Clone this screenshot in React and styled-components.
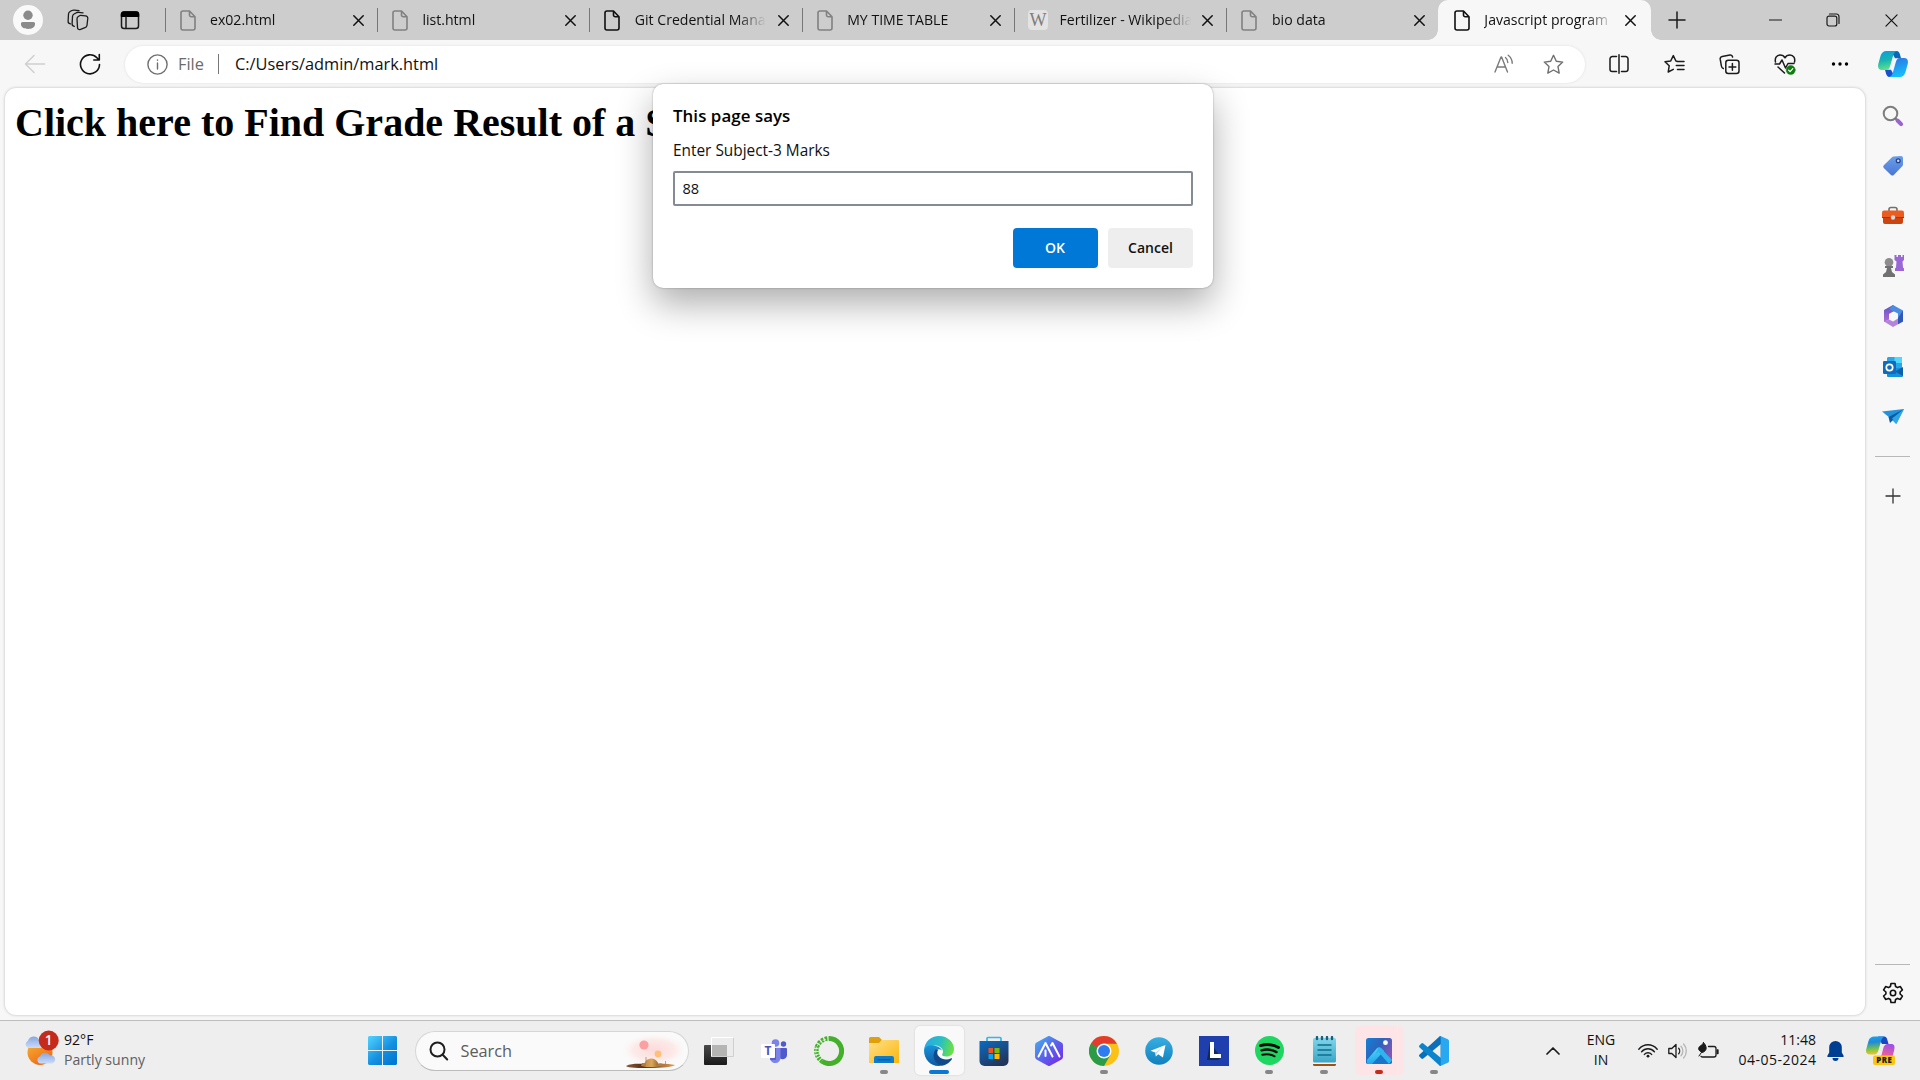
import React from "react";
import styled, { createGlobalStyle, css } from "styled-components";

const ui = `"Open Sans", "Noto Sans", sans-serif`;

const Global = createGlobalStyle`
  *, *::before, *::after { box-sizing: border-box; }
  html, body { margin: 0; height: 100%; overflow: hidden; }
  body { background: #f7f7f7; font-family: ${ui}; color: #111; }
  svg { display: block; flex: none; }
`;

const Screen = styled.div`
  width: 1920px;
  height: 1080px;
  display: flex;
  flex-direction: column;
  background: #f7f7f7;
  position: relative;
  overflow: hidden;
`;

const Slot = styled.div`
  flex: none;
  width: ${(p) => p.$w || 55}px;
  height: ${(p) => (p.$h ? p.$h + "px" : "100%")};
  display: flex;
  align-items: center;
  justify-content: center;
`;

/* ---------- tab strip ---------- */
const TabStrip = styled.header`
  flex: none;
  height: 40px;
  display: flex;
  background: #cdcdcd;
`;
const StripTools = styled.div`
  display: flex;
  width: 164px;
  padding-left: 3px;
`;
const Tab = styled.div`
  position: relative;
  width: 212.4px;
  height: 40px;
  display: flex;
  align-items: center;
  padding: 0 ${(p) => p.$end || 11}px 0 15.5px;
  font-size: 14.1px;
  ${(p) =>
    p.$active
      ? css`
          background: #f7f7f7;
          border-radius: 10px 10px 0 0;
          &::before, &::after {
            content: "";
            position: absolute;
            bottom: 0;
            width: 10px;
            height: 10px;
          }
          &::before { left: -10px; background: radial-gradient(circle at 0 0, transparent 9.5px, #f7f7f7 10px); }
          &::after { right: -10px; background: radial-gradient(circle at 100% 0, transparent 9.5px, #f7f7f7 10px); }
        `
      : css`
          &::before {
            content: "";
            position: absolute;
            left: 0.5px;
            top: 8px;
            width: 1px;
            height: 24px;
            background: #777;
          }
        `}
`;
const TabTitle = styled.span`
  flex: 1;
  min-width: 0;
  margin-left: 14.5px;
  line-height: 22px;
  white-space: nowrap;
  overflow: hidden;
  -webkit-mask-image: linear-gradient(90deg, #000 calc(100% - 30px), transparent calc(100% - 1px));
  mask-image: linear-gradient(90deg, #000 calc(100% - 30px), transparent calc(100% - 1px));
`;
const TabClose = styled.div`
  width: 14px;
  margin-left: 9px;
  display: flex;
  justify-content: center;
`;
const WindowButtons = styled.div`
  display: flex;
  margin-left: auto;
`;

/* ---------- toolbar ---------- */
const Toolbar = styled.nav`
  flex: none;
  height: 48px;
  display: flex;
  align-items: center;
  padding-left: 7.5px;
`;
const Omnibox = styled.div`
  width: 1460px;
  height: 37px;
  margin: 0 6.5px 0 7.5px;
  padding: 0 21px 0 22px;
  display: flex;
  align-items: center;
  background: #fff;
  border-radius: 19px;
  box-shadow: 0 0 3px rgba(0, 0, 0, 0.1);
  font-size: 16.35px;
`;
const Scheme = styled.span`
  margin-left: 10px;
  width: 40px;
  color: #6b6b6b;
`;
const Divider = styled.i`
  width: 1px;
  height: 20px;
  background: #777;
`;
const Url = styled.span`
  margin-left: 16px;
  flex: 1;
  color: #111;
`;
const BoxIcons = styled.div`
  display: flex;
  align-items: center;
  gap: 29px;
`;

/* ---------- page + sidebar ---------- */
const Body = styled.div`
  flex: 1;
  display: flex;
  min-height: 0;
`;
const Page = styled.main`
  flex: none;
  width: 1860px;
  height: 927px;
  margin-left: 5px;
  background: #fff;
  border-radius: 11px;
  box-shadow: 0 0 3px rgba(0, 0, 0, 0.25);
`;
const Heading = styled.h1`
  margin: 0;
  padding: 11px 0 0 10px;
  font: bold 40px/47px "Liberation Serif", "Times New Roman", serif;
  color: #000;
  white-space: nowrap;
`;
const Sidebar = styled.aside`
  flex: none;
  width: 55px;
  display: flex;
  flex-direction: column;
  align-items: center;
  padding-top: 2.5px;
`;
const Rule = styled.hr`
  flex: none;
  width: 35px;
  height: 1px;
  margin: ${(p) => p.$m};
  border: 0;
  background: #b8b8b8;
`;

/* ---------- prompt ---------- */
const Prompt = styled.section`
  position: absolute;
  left: 653px;
  top: 84px;
  width: 560px;
  height: 204px;
  padding: 19px 20px 20px;
  display: flex;
  flex-direction: column;
  background: #fff;
  border-radius: 10px;
  box-shadow: 0 0 2px rgba(0, 0, 0, 0.35), 0 16px 36px rgba(0, 0, 0, 0.32);
`;
const PromptTitle = styled.h2`
  margin: 0;
  font-size: 16.9px;
  font-weight: 600;
  line-height: 26px;
  letter-spacing: 0.05px;
  color: #000;
`;
const PromptText = styled.p`
  margin: 10px 0 8px;
  font-size: 15.4px;
  line-height: 24px;
`;
const PromptInput = styled.div`
  height: 35px;
  padding-left: 7.5px;
  border: 2px solid #858b94;
  border-radius: 2px;
  font-size: 14.6px;
  line-height: 30px;
`;
const PromptActions = styled.div`
  display: flex;
  justify-content: flex-end;
  gap: 10px;
  margin-top: auto;
`;
const Button = styled.button`
  width: 85px;
  height: 40px;
  padding: 0 ${(p) => (p.$primary ? 1 : 0)}px 2px 0;
  border: 0;
  border-radius: 4px;
  font: 600 14px ${ui};
  background: ${(p) => (p.$primary ? "#0078d7" : "#eeeeee")};
  color: ${(p) => (p.$primary ? "#fff" : "#111")};
`;

/* ---------- taskbar ---------- */
const Taskbar = styled.footer`
  flex: none;
  height: 60px;
  display: flex;
  align-items: center;
  border-top: 1px solid #bdbdbd;
  background: #eeeeee;
`;
const Weather = styled.div`
  width: 354.5px;
  padding-left: 24px;
  padding-bottom: 2px;
  display: flex;
  gap: 5px;
  font-size: 14.1px;
  line-height: 20px;
`;
const Muted = styled.div`
  color: #606060;
`;
const SearchBox = styled.div`
  width: 274px;
  height: 40px;
  margin: 0 3px 0 5px;
  padding: 0 4px 0 13px;
  display: flex;
  align-items: center;
  background: #fafafa;
  border: 1px solid #d6d6d6;
  border-bottom-color: #bcbcbc;
  border-radius: 20px;
  font-size: 16.3px;
  color: #5c5c5c;
`;
const SearchLabel = styled.span`
  flex: 1;
  margin-left: 12px;
`;
const AppSlot = styled.div`
  position: relative;
  width: 55px;
  height: 59px;
  display: flex;
  align-items: center;
  justify-content: center;
  &::after {
    content: "";
    position: absolute;
    bottom: 6px;
    left: 50%;
    width: ${(p) => (p.$mark === "active" ? 20 : 8)}px;
    height: 4px;
    border-radius: 2px;
    transform: translateX(-50%);
    background: ${(p) => ({ active: "#0a78d4", open: "#868686", alert: "#c42b1c" })[p.$mark] || "transparent"};
  }
`;
const Tile = styled.div`
  width: 49px;
  height: 49px;
  border-radius: 5px;
  display: flex;
  align-items: center;
  justify-content: center;
  background: ${(p) => ({ active: "#f9f9f9", alert: "linear-gradient(90deg,#fde5e7 42px,#f8e9ea 42px,#f8e9ea 43px,#fde5e7 43px)" })[p.$kind] || "transparent"};
  box-shadow: ${(p) => (p.$kind === "active" ? "0 0 2px rgba(0,0,0,.15)" : "none")};
`;
const Tray = styled.div`
  display: flex;
  align-items: center;
  height: 100%;
  margin-left: auto;
  padding-right: 14px;
  font-size: 14px;
  line-height: 20px;
`;
const TrayText = styled.div`
  width: ${(p) => p.$w}px;
  margin-right: ${(p) => p.$mr || 0}px;
  padding-bottom: 2px;
  text-align: ${(p) => p.$align};
  white-space: nowrap;
`;
const DateText = styled.div`
  letter-spacing: 0.5px;
  margin-right: -0.5px;
`;

/* ---------- icons ---------- */
const Line = ({ w = 20, h = w, vb = "0 0 20 20", c = "#1b1b1b", sw = 1.3, children }) => (
  <svg width={w} height={h} viewBox={vb} fill="none" stroke={c} strokeWidth={sw} strokeLinecap="round" strokeLinejoin="round">
    {children}
  </svg>
);
const Avatar = () => (
  <svg width="30" height="30" viewBox="0 0 30 30">
    <circle cx="15" cy="15" r="15" fill="#f9f9f9" />
    <circle cx="15" cy="10.2" r="4.7" fill="#8b8b8b" />
    <path d="M8 19.3a2 2 0 0 1 2-2.3h10a2 2 0 0 1 2 2.3c0 3-3 4.700-7 4.700s-7-1.700-7-4.700z" fill="#8b8b8b" />
  </svg>
);
const Workspaces = () => (
  <Line w={22} vb="0 0 22 22">
    <path d="M13.500 6.300l5 .5c1.500.2 2.300 1.200 2.300 2.500l-.8 7c-.2 1.300-.9 2-2 2.300l-4.500 1.800c-1.600.5-3-.3-3-2L10 10c0-1.200.4-1.900 1.300-2.500z" />
    <path d="M7.300 17.300c-1.500-.3-2.300-1.200-2.200-2.600L5.500 7.500c.1-1.200.6-1.900 1.600-2.500l2.300-1.300c.8-.4 1.500-.5 2.400-.4l4.200.5" />
    <path d="M3.400 14.800C2 14.500 1 13.600 1.100 12.200l.4-7.200c.1-1.200.6-1.900 1.600-2.500l1.800-1c.8-.4 1.500-.5 2.400-.4l4.700.5" />
  </Line>
);
const TabActions = () => (
  <Line w={20} sw={1.5}>
    <rect x="1.5" y="2" width="17" height="16.5" rx="2.5" />
    <path d="M1.500 6.200V4.500A2.500 2.500 0 0 1 4 2h12a2.500 2.500 0 0 1 2.500 2.500v1.700z" fill="#000" stroke="#000" />
    <path d="M6 7v11" />
  </Line>
);
const Doc = ({ dark }) => (
  <Line w={16} h={21} vb="0 0 16 21" c={dark ? "#111" : "#818181"} sw={1.6}>
    <path d="M3 1h6.500L15 6.700V18a2 2 0 0 1-2 2H3a2 2 0 0 1-2-2V3a2 2 0 0 1 2-2zM9.500 1v4a1.700 1.700 0 0 0 1.700 1.700H15" />
  </Line>
);
const Cross = ({ s = 11, sw = 1.5 }) => (
  <Line w={s} vb="0 0 11 11" sw={sw} c="#111">
    <path d="M.8.8l9.400 9.400M10.200.8L.8 10.200" />
  </Line>
);
const WikiMark = styled.span`
  width: 20px;
  height: 20px;
  margin-left: -1px;
  margin-right: -3px;
  border-radius: 4px;
  background: #e3e3e3;
  color: #7d7d7d;
  font: 18px/20px "Liberation Serif", serif;
  text-align: center;
`;

const CopilotMark = ({ w = 30, h = 26 }) => (
  <svg width={w} height={h} viewBox="0 0 30 26">
    <defs>
      <linearGradient id="cpA" x1="0" y1="0" x2=".2" y2="1">
        <stop offset="0" stopColor="#0c9be0" /><stop offset=".55" stopColor="#1bb5b0" /><stop offset="1" stopColor="#5be08c" />
      </linearGradient>
      <linearGradient id="cpB" x1="0" y1="0" x2=".3" y2="1">
        <stop offset="0" stopColor="#2f6fe0" /><stop offset="1" stopColor="#15bdfb" />
      </linearGradient>
    </defs>
    <path d="M13 0h5.500c2 0 2.900 1.600 3.500 3.500l1 3.700H17z" fill="#0a66b8" />
    <path d="M17 26h-5.500c-2 0-2.900-1.600-3.500-3.500L7 18.700h6z" fill="#1a4fd0" />
    <path d="M8.500 0H19c-2.500.5-3.300 2.500-4 5l-2.700 9.500c-.8 3-2 4.500-4.500 4.500H4c-3.400 0-4.500-2.500-3.700-6L2.500 5C3.300 2 5.300 0 8.500 0z" fill="url(#cpA)" />
    <path d="M21.500 26H11c2.500-.5 3.300-2.500 4-5l2.700-9.500c.8-3 2-4.500 4.500-4.500H26c3.400 0 4.500 2.500 3.700 6L27.500 21c-.8 3-2.800 5-6 5z" fill="url(#cpB)" />
  </svg>
);
const SideSearch = () => (
  <svg width="22" height="22" viewBox="0 0 22 22" fill="none">
    <circle cx="8.500" cy="8.500" r="6.800" stroke="#7d7d7d" strokeWidth="2" />
    <path d="M13 13l2 2" stroke="#777" strokeWidth="2" />
    <path d="M15.500 15.500l3.600 3.600" stroke="#9a63cf" strokeWidth="4" strokeLinecap="round" />
  </svg>
);
const SideTag = () => (
  <svg width="22" height="22" viewBox="0 0 22 22">
    <defs><linearGradient id="tg" x1="0" y1="0" x2="0" y2="1"><stop stopColor="#6ba0ea" /><stop offset="1" stopColor="#4a76d6" /></linearGradient></defs>
    <path d="M11.500 1.500L19 1a2 2 0 0 1 2 2v6.500c0 .8-.3 1.300-.8 1.800l-8.400 8.600a2 2 0 0 1-2.800 0L1.800 13a2 2 0 0 1 0-2.800L10 2.200c.4-.4.900-.7 1.500-.7z" fill="url(#tg)" />
    <circle cx="16.200" cy="5.800" r="1.900" fill="#c8dcf8" stroke="#27408c" strokeWidth="1.300" />
  </svg>
);
const SideTools = () => (
  <svg width="22" height="19" viewBox="0 1.500 22 17">
    <path d="M7 6V4a2 2 0 0 1 2-2h4a2 2 0 0 1 2 2v2" fill="none" stroke="#707070" strokeWidth="1.600" />
    <rect y="5" width="22" height="8" rx="2" fill="#ec5c1e" />
    <path d="M1 12h20v4.500a2 2 0 0 1-2 2H3a2 2 0 0 1-2-2z" fill="#cc4410" />
    <rect x="0" y="11.500" width="22" height="1" fill="#a93408" />
    <circle cx="11" cy="12" r="2.200" fill="#d9d9d9" />
  </svg>
);
const SideGames = () => (
  <svg width="22" height="22" viewBox="0 0 22 22">
    <path d="M12.500 0h2v2H16V0h3v2h1.500V0h1.500v5l-1.500 1.500.5 6 1 1V16h-9v-2.500l1-1 .5-6L12.500 5z" fill="#9a68d4" />
    <circle cx="7" cy="7.300" r="4.300" fill="#8c8c8c" />
    <path d="M3 11h8v2H9l1 4 3 2.500V22H1v-2.500L4 17l1-4H3z" fill="#717171" />
  </svg>
);
const SideM365 = () => (
  <svg width="20" height="22" viewBox="0 0 20 22">
    <defs><linearGradient id="mm" x1="0" y1="0" x2="0" y2="1"><stop stopColor="#5a55c0" /><stop offset="1" stopColor="#b56ad8" /></linearGradient></defs>
    <path d="M10 0L1 5v12l5-2.500V9l8-4.500z" fill="url(#mm)" />
    <path d="M10 0l10 5.500V16l-5-3V8.500L6 4z" fill="#4b8be0" />
    <path d="M1 16.500L10 22l10-5.500v-6l-5 3-5 3-4-2z" fill="#b483dc" />
    <path d="M20 5.500v11l-5 2.700V13z" fill="#3157b8" />
    <path d="M10 7l3.500 2v4L10 15l-3.500-2V9z" fill="#f7f7f7" />
  </svg>
);
const SideOutlook = () => (
  <svg width="20" height="20" viewBox="0 0 20 20">
    <path d="M5 0h13a1 1 0 0 1 1 1v10H4V1z" fill="#28a8ea" />
    <path d="M11.500 0H18a1 1 0 0 1 1 1v5h-7.500z" fill="#50d9ff" />
    <path d="M4 11h16v8a1 1 0 0 1-1 1H5a1 1 0 0 1-1-1z" fill="#1490df" />
    <path d="M20 10v9l-8-4.500z" fill="#0f5ea8" />
    <rect y="4" width="13" height="13" rx="1.200" fill="#0f6cbd" />
    <circle cx="6.500" cy="10.500" r="3.200" fill="none" stroke="#fff" strokeWidth="1.700" />
  </svg>
);
const SideDrop = () => (
  <svg width="22" height="16" viewBox="0 0 22 16">
    <path d="M0 2.500L22 0 8 9z" fill="#2493dc" />
    <path d="M22 0l-8 15-6-6z" fill="#35b4ee" />
    <path d="M22 0L6.500 8 8 14l3-3z" fill="#0b5ba5" />
    <path d="M22 0L10 9.500l4.500 5.500z" fill="#2ea6e6" />
  </svg>
);
const Gear = () => (
  <Line w={22} vb="0 0 22 22" sw={1.6} c="#111">
    <path d="M9 1.500h4l.6 3 1.900 1.100 2.900-1 2 3.400-2.300 2v2l2.300 2-2 3.400-2.900-1-1.900 1.100-.6 3H9l-.6-3-1.900-1.100-2.900 1-2-3.400 2.300-2v-2l-2.300-2 2-3.400 2.900 1 1.900-1.100z" />
    <circle cx="11" cy="11" r="2.700" />
  </Line>
);

const WeatherIcon = () => (
  <svg width="35" height="36" viewBox="0 0 35 36">
    <defs>
      <linearGradient id="sun" x1="0" y1="0" x2=".6" y2="1"><stop stopColor="#f6b73c" /><stop offset="1" stopColor="#ee6a12" /></linearGradient>
      <linearGradient id="cl" x1="0" y1="0" x2="0" y2="1"><stop stopColor="#86a6e2" /><stop offset="1" stopColor="#ccdcf6" /></linearGradient>
    </defs>
    <circle cx="16" cy="22.500" r="12.500" fill="url(#sun)" />
    <path d="M4 18a4 4 0 0 1 0-7.300 6 6 0 0 1 11-1 4.500 4.500 0 0 1 3 8.300z" fill="url(#cl)" />
    <path d="M16.500 33.500a3.600 3.600 0 0 1-.5-7 5.500 5.500 0 0 1 10-1 4.100 4.100 0 0 1 2 8z" fill="url(#cl)" />
    <circle cx="24.700" cy="10.500" r="10" fill="#c42b1c" />
    <text x="24.700" y="15.300" textAnchor="middle" fontSize="13.500" fontFamily="Open Sans" fontWeight="600" fill="#fff">1</text>
  </svg>
);
const StartIcon = () => (
  <svg width="29" height="29" viewBox="0 0 29 29">
    <defs><linearGradient id="wn" gradientUnits="userSpaceOnUse" x1="0" y1="0" x2="25" y2="27"><stop stopColor="#52d4ff" /><stop offset=".6" stopColor="#1590e0" /><stop offset="1" stopColor="#0378d4" /></linearGradient></defs>
    <path d="M1 0h13v14H0V1zM15 0h13l1 1v13H15zM0 15h14v14H1l-1-1zM15 15h14v13l-1 1H15z" fill="url(#wn)" />
  </svg>
);
const SearchArt = () => (
  <svg width="65" height="36" viewBox="0 0 65 36">
    <defs>
      <radialGradient id="glow"><stop stopColor="#fdd9da" /><stop offset=".6" stopColor="#fce6e3" stopOpacity=".8" /><stop offset="1" stopColor="#fafafa" stopOpacity="0" /></radialGradient>
      <linearGradient id="gr"><stop stopColor="#8b5a3a" /><stop offset=".35" stopColor="#5b2c14" /><stop offset="1" stopColor="#e0a05a" /></linearGradient>
      <linearGradient id="dm"><stop stopColor="#c08a45" /><stop offset=".5" stopColor="#dca55a" /><stop offset="1" stopColor="#94642e" /></linearGradient>
    </defs>
    <ellipse cx="35" cy="17" rx="34" ry="17" fill="url(#glow)" />
    <circle cx="25" cy="12" r="4.600" fill="#fba0a2" />
    <circle cx="39" cy="21" r="3.400" fill="#ffc078" />
    <path d="M7 33c6-3 14-2 20-2s22-1 29 1c-2 2-12 3-24 3S9 35 7 33z" fill="url(#gr)" />
    <path d="M26 34c-2-5 2-8.500 6.500-8.500S40 30 40 34z" fill="url(#dm)" />
    <path d="M38 33c0-2 3-4 6-2l2 2zM22 33l1-3h4v4z" fill="#b47c3c" />
    <path d="M27 29v-5M46.500 31v-3" stroke="#8d6a50" strokeWidth=".6" />
  </svg>
);
const TaskView = () => (
  <svg width="30" height="28" viewBox="0 0 30 28">
    <defs><linearGradient id="tv" x1="0" y1="0" x2="0" y2="1"><stop stopColor="#4a4a4a" /><stop offset="1" stopColor="#1a1a1a" /></linearGradient></defs>
    <rect x="0" y="8" width="23" height="20" rx="1" fill="url(#tv)" />
    <rect x="7" y="0" width="23" height="20" rx="1" fill="#ececec" />
    <rect x="7" y="8" width="16" height="12" fill="#b5b5b3" />
    <path d="M7 19.500h22.500V1" stroke="#cfcfcf" fill="none" />
    <path d="M7.500 19V.5H29" stroke="#fff" fill="none" />
  </svg>
);
const Teams = () => (
  <svg width="27" height="24" viewBox="0 0 27 24">
    <circle cx="14.500" cy="4" r="3.800" fill="#7b83eb" />
    <circle cx="22.500" cy="5" r="2.700" fill="#5059c9" />
    <path d="M16 9h9a1 1 0 0 1 1 1v6a4.500 4.500 0 0 1-8 2.500z" fill="#5059c9" />
    <path d="M9 9h10.500v9a5.300 5.300 0 0 1-10.500 1.500z" fill="#7b83eb" />
    <path d="M9 9h6v12H9z" fill="#4b53bc" opacity=".7" />
    <rect y="5" width="14" height="14" rx="1" fill="#fff" />
    <text x="7" y="16" textAnchor="middle" fontSize="12" fontWeight="700" fontFamily="Open Sans" fill="#4b53bc">T</text>
  </svg>
);
const Anaconda = () => (
  <svg width="30" height="30" viewBox="0 0 30 30" fill="none" stroke="#43b02a">
    <path d="M15 2.500a12.500 12.500 0 1 1-7 22.800" strokeWidth="5" />
    <path d="M8 25.300A12.500 12.500 0 0 1 3 11" strokeWidth="4.500" strokeDasharray="2 1" />
    <path d="M3 11A12.500 12.500 0 0 1 15 2.500" strokeWidth="4.500" strokeDasharray="2.600 1.200" />
    <path d="M3.500 22A12.500 12.500 0 0 1 12 3.500" stroke="#eee" strokeWidth=".9" strokeDasharray="1.500 1" />
  </svg>
);
const Explorer = () => (
  <svg width="30" height="27" viewBox="0 0 30 27">
    <defs><linearGradient id="ex" x1="0" y1="0" x2="1" y2="1"><stop stopColor="#ffe08a" /><stop offset="1" stopColor="#fbb70c" /></linearGradient></defs>
    <path d="M0 1.500A1.500 1.500 0 0 1 1.500 0H10l3 3-3 4H0z" fill="#dfa00c" />
    <path d="M0 6h10l3-3h16a1 1 0 0 1 1 1v22H0z" fill="url(#ex)" />
    <path d="M5 26v-5a2 2 0 0 1 2-2h16a2 2 0 0 1 2 2v5z" fill="#0f7ccb" />
    <path d="M8.500 22.800h13" stroke="#0a4f94" />
  </svg>
);
const Edge = () => (
  <svg width="30" height="30" viewBox="0 0 30 30">
    <defs>
      <linearGradient id="e1" x1="0" y1=".3" x2="1" y2=".5"><stop stopColor="#28a9e8" /><stop offset=".55" stopColor="#2bc0c0" /><stop offset="1" stopColor="#6be33c" /></linearGradient>
      <linearGradient id="e2" x1="0" y1="0" x2="0" y2="1"><stop stopColor="#1b93d8" /><stop offset="1" stopColor="#0c59a4" /></linearGradient>
    </defs>
    <path d="M0 14C.8 5.500 7 0 15 0c9 0 15 6.500 15 13 0 5-3.500 7.500-7.500 7.500-3 0-4.800-1-4.300-2.300.8-1.200 1.100-2.700.5-4.200C17 9 7 7 0 14z" fill="url(#e1)" />
    <path d="M0 14c2-4.500 6.500-5 10-4.500 5 .8 8 3.500 8.600 6.200-1.500-4-7.600-3-7.600 2.300 0 6 5 10.500 10 8-2 2.500-4.500 4-6.500 4C6.500 30 0 23.500 0 14z" fill="url(#e2)" />
    <path d="M11.500 13.500c-4.500 7-.5 14 6 16.200C22 29.500 26 26 28 23c.3-.7-.3-1-.8-.7-4 2.200-9.200 1.500-12-1.500-2.500-2.500-2.200-5-1-7z" fill="#114a8b" />
  </svg>
);
const Store = () => (
  <svg width="30" height="30" viewBox="0 0 30 30">
    <defs><linearGradient id="st" x1="0" y1="0" x2=".6" y2="1"><stop stopColor="#0a6cc2" /><stop offset="1" stopColor="#24355c" /></linearGradient></defs>
    <path d="M8 7V2.500A1 1 0 0 1 9 1.500h12a1 1 0 0 1 1 1V7" fill="none" stroke="#2cb8f2" strokeWidth="1.700" />
    <path d="M.5 5h29v20a5 5 0 0 1-5 5h-19a5 5 0 0 1-5-5z" fill="url(#st)" />
    <path d="M9.500 12H14v5H9.500z" fill="#f25022" /><path d="M15.500 12h5v5h-5z" fill="#7fba00" />
    <path d="M9.500 18H14v5H9.500z" fill="#00a4ef" /><path d="M15.500 18h5v5h-5z" fill="#ffb900" />
  </svg>
);
const HexAI = () => (
  <svg width="28" height="30" viewBox="0 0 28 30">
    <defs><linearGradient id="hx" x1="0" y1="0" x2="1" y2="1"><stop stopColor="#42b8f5" /><stop offset=".5" stopColor="#5a63e8" /><stop offset="1" stopColor="#7a1ff0" /></linearGradient></defs>
    <path d="M12.500.4a3 3 0 0 1 3 0l11 6.200A3 3 0 0 1 28 9.200v11.600a3 3 0 0 1-1.500 2.600l-11 6.200a3 3 0 0 1-3 0l-11-6.200A3 3 0 0 1 0 20.800V9.200a3 3 0 0 1 1.500-2.600z" fill="url(#hx)" />
    <path d="M3.500 20.500L10.500 7l7 13.500M10.500 14.500V20M16 9.500L17.500 7l7 13.500" stroke="#fff" strokeWidth="2" fill="none" strokeLinecap="round" strokeLinejoin="round" />
  </svg>
);
const Chrome = () => (
  <svg width="30" height="30" viewBox="0 0 30 30">
    <circle cx="15" cy="15" r="15" fill="#fbc116" />
    <path d="M15 15L2 7.500A15 15 0 0 0 15 30l6.500-11.300z" fill="#2a9b47" />
    <path d="M2 7.500A15 15 0 0 1 28 7.700H15l-6.300 11z" fill="#e33b2e" />
    <path d="M2 7.500L8.700 18.700 15 15z" fill="#2a9b47" />
    <circle cx="15" cy="15" r="7.500" fill="#fff" /><circle cx="15" cy="15" r="6" fill="#2f7cf0" />
  </svg>
);
const Telegram = () => (
  <svg width="28" height="28" viewBox="0 0 28 28">
    <defs><linearGradient id="te" x1="0" y1="0" x2="0" y2="1"><stop stopColor="#37aee2" /><stop offset="1" stopColor="#1180bd" /></linearGradient></defs>
    <circle cx="14" cy="14" r="13.800" fill="url(#te)" />
    <path d="M5.500 13.700L20.500 8l-2.600 12.500-4.700-3.300-2.300 2.300-.6-4z" fill="#fff" />
    <path d="M10.400 15.500l7-5.200-5.600 6-.9 3.200z" fill="#b9d8ea" />
  </svg>
);
const LApp = () => (
  <svg width="30" height="30" viewBox="0 0 30 30">
    <rect width="30" height="30" fill="#1f3fae" />
    <path d="M11 6L8 24h11l3-2z" fill="#0c2c55" />
    <path d="M11 6h4v12h7v4H11z" fill="#fff" />
  </svg>
);
const Spotify = () => (
  <svg width="29" height="29" viewBox="0 0 29 29" fill="none" stroke="#0b0b0b" strokeLinecap="round">
    <circle cx="14.500" cy="14.500" r="14.500" fill="#1ed760" stroke="none" />
    <path d="M5.500 9.600c6-1.600 13-1.100 18 1.800" strokeWidth="2.900" />
    <path d="M6.500 14.300c5-1.400 10.500-.8 15 1.800" strokeWidth="2.400" />
    <path d="M7.300 18.800c4-1.100 8.600-.7 12.300 1.500" strokeWidth="2" />
  </svg>
);
const Notepad = () => (
  <svg width="23" height="30" viewBox="0 0 23 30">
    <defs><linearGradient id="np" x1="0" y1="0" x2="0" y2="1"><stop stopColor="#7fd6ea" /><stop offset="1" stopColor="#3ba5c8" /></linearGradient></defs>
    <rect y="24" width="23" height="6" rx="1.500" fill="#a3500f" />
    <rect y="24" width="23" height="4" fill="#f2f2f2" />
    <rect y="2" width="23" height="24.500" rx="1.500" fill="url(#np)" />
    <path d="M4.500 9h14M4.500 14h14M4.500 19h14" stroke="#0e6d8e" strokeWidth="1.700" />
    <path d="M4 1v2M9 1v2M14 1v2M19 1v2" stroke="#1b5f7c" strokeWidth="2.400" strokeLinecap="round" />
  </svg>
);
const Photos = () => (
  <svg width="26" height="26" viewBox="0 0 26 26">
    <defs>
      <linearGradient id="ph" x1="0" y1="0" x2="1" y2=".6"><stop stopColor="#157fd8" /><stop offset=".5" stopColor="#2c63bb" /><stop offset="1" stopColor="#8a55b5" /></linearGradient>
      <linearGradient id="mt" x1="0" y1="0" x2=".3" y2="1"><stop stopColor="#5ee0fb" /><stop offset="1" stopColor="#1ea4ea" /></linearGradient>
      <clipPath id="pc"><rect width="26" height="26" rx="2.500" /></clipPath>
    </defs>
    <g clipPath="url(#pc)">
      <rect width="26" height="26" fill="url(#ph)" />
      <path d="M0 22l10-11a3.500 3.500 0 0 1 5 0l11 12v3H0z" fill="#1a74c9" />
      <path d="M1 26v-4l9.500-11.300a3.500 3.500 0 0 1 5.200 0L18 13l-12 13z" fill="url(#mt)" />
      <path d="M12.500 9.500c1 0 2 .3 3 1.200L26 22l-3 4L12.500 14 9 17z" fill="#2eb5f0" />
    </g>
    <circle cx="19.500" cy="4.700" r="2.400" fill="#fff" />
  </svg>
);
const VSCode = () => (
  <svg width="30" height="30" viewBox="0 0 30 30">
    <path d="M22 .3V8L4.300 22.500a1.500 1.500 0 0 1-1.900 0L.6 20.800a1.500 1.500 0 0 1 0-2.200L20.500.6z" fill="#0a6fb8" />
    <path d="M22 29.700V22L4.300 7.500a1.500 1.500 0 0 0-1.900 0L.6 9.200a1.500 1.500 0 0 0 0 2.200l19.900 18z" fill="#0c84cc" />
    <path d="M22 .2l6.800 3a2 2 0 0 1 1.200 2v19.600a2 2 0 0 1-1.200 2l-6.800 3z" fill="#29a8f2" />
    <path d="M22 .2v29.600c-.9.300-1.700 0-2-.5.900.2 1.500-.3 1.500-1.300V2c0-1-.6-1.500-1.500-1.300.3-.5 1.100-.8 2-.5z" fill="#1c8ed8" />
  </svg>
);
const Wifi = () => (
  <Line w={20} h={16} vb="0 0 20 16" sw={1.4}>
    <path d="M.8 6.200C6 .3 14 .3 19.200 6.200M3.600 8.800c3.600-4 9.200-4 12.800 0M6.400 11.400c2-2.300 5.200-2.300 7.200 0" />
    <circle cx="10" cy="13.200" r="1.400" fill="#1b1b1b" stroke="none" />
  </Line>
);
const Volume = () => (
  <Line w={20} h={16} vb="0 0 20 16">
    <path d="M.8 5.500h3L8 1.500v13l-4.200-4h-3zM10.700 5.300c1.300 1.500 1.300 4 0 5.400" />
    <path d="M13 3.200c2.500 2.700 2.500 7 0 9.600M15.600 1c3.600 4 3.600 10 0 14" stroke="#b5b5b5" />
  </Line>
);
const Battery = () => (
  <Line w={21} h={17} vb="0 0 21 17">
    <path d="M10.500 4.500H16a2 2 0 0 1 2 2v6.500a2 2 0 0 1-2 2H4.500a2 2 0 0 1-1.500-.7" />
    <path d="M19.200 8h.8v3.500h-.8z" fill="#1b1b1b" />
    <path d="M5.500.5c3 3 4.500 8-1 10C-.5 8.500 0 5.500 2.500 3.800 4 2.700 5.200 2 5.500.5zM1 14L4.500 9" fill="#1b1b1b" stroke="#1b1b1b" strokeWidth="1" />
  </Line>
);
const Bell = () => (
  <svg width="17" height="20" viewBox="0 0 17 20" fill="#003e92">
    <path d="M8.500 0a6.300 6.300 0 0 1 6.300 6.300v5.200l1.800 3.200c.3.600 0 1.300-.7 1.300H1.100c-.7 0-1-.7-.7-1.300l1.800-3.200V6.300A6.300 6.300 0 0 1 8.500 0zM5.500 17h6a3 3 0 0 1-6 0z" />
  </svg>
);
const CopilotPre = () => (
  <svg width="29" height="29" viewBox="0 0 29 29">
    <defs>
      <linearGradient id="pa" x1="0" y1="0" x2=".1" y2="1"><stop stopColor="#12a6ee" /><stop offset=".35" stopColor="#2388d8" /><stop offset=".7" stopColor="#6fc253" /><stop offset="1" stopColor="#f0c41c" /></linearGradient>
      <linearGradient id="pb" x1=".6" y1="0" x2=".3" y2="1"><stop stopColor="#a050e8" /><stop offset=".6" stopColor="#ec5f98" /><stop offset="1" stopColor="#f8884f" /></linearGradient>
    </defs>
    <path d="M12 .5h6c2 0 2.800 1.500 3.400 3.400L22.500 8H16z" fill="#1748c4" />
    <path d="M8.500.5H19c-2.500.5-3.300 2.500-4 5L12.500 14c-.8 3-2 4.500-4.500 4.500H4c-3.400 0-4.500-2-3.700-5.500L2.500 5c.8-3 2.800-4.500 6-4.500z" fill="url(#pa)" />
    <path d="M22 26H11c2.500-.5 3.300-2.500 4-5l2.200-8.500c.8-3 2-4.500 4.500-4.500h3.500c3.400 0 3.700 2.500 3 6l-2 8c-.6 2.500-2 4-4.200 4z" fill="url(#pb)" />
    <rect x="7" y="19.500" width="22" height="9.500" rx="2" fill="#fcc50e" />
    <text x="18.300" y="27" textAnchor="middle" fontFamily="Open Sans" fontSize="7.800" fontWeight="800" letterSpacing=".6" fill="#1b1b1b">PRE</text>
  </svg>
);

/* ---------- data ---------- */
const tabs = [
  { title: "ex02.html" },
  { title: "list.html" },
  { title: "Git Credential Mana", dark: true },
  { title: "MY TIME TABLE" },
  { title: "Fertilizer - Wikipedia", wiki: true },
  { title: "bio data", end: 12 },
  { title: "Javascript program", dark: true, active: true, end: 13 },
];
const sideIcons = [SideSearch, SideTag, SideTools, SideGames, SideM365, SideOutlook, SideDrop];
const apps = [
  [TaskView], [Teams], [Anaconda], [Explorer, "open"], [Edge, "active"], [Store], [HexAI],
  [Chrome, "open"], [Telegram], [LApp], [Spotify, "open"], [Notepad, "open"], [Photos, "alert"], [VSCode, "open"],
];

export default function App() {
  return (
    <Screen>
      <Global />
      <TabStrip>
        <StripTools>
          <Slot $w={50}><Avatar /></Slot>
          <Slot $w={50}><Workspaces /></Slot>
          <Slot $w={54}><TabActions /></Slot>
        </StripTools>
        {tabs.map((t) => (
          <Tab key={t.title} $active={t.active} $end={t.end}>
            {t.wiki ? <WikiMark>W</WikiMark> : <Doc dark={t.dark} />}
            <TabTitle>{t.title}</TabTitle>
            <TabClose><Cross /></TabClose>
          </Tab>
        ))}
        <Slot $w={52}>
          <Line w={18} vb="0 0 18 18" sw={1.5}><path d="M9 1v16M1 9h16" /></Line>
        </Slot>
        <WindowButtons>
          <Slot $w={57}><Line w={13} vb="0 0 13 13" sw={1.2}><path d="M.5 6h12" /></Line></Slot>
          <Slot $w={58}>
            <Line w={14} vb="0 0 14 14" sw={1.2}>
              <rect x="1" y="3.200" width="9.800" height="9.800" rx="2" />
              <path d="M3.500 1h6.800A2.800 2.800 0 0 1 13 3.800v6.700" />
            </Line>
          </Slot>
          <Slot $w={58}><Cross s={13} sw={1} /></Slot>
        </WindowButtons>
      </TabStrip>

      <Toolbar>
        <Slot><Line w={22} vb="0 0 22 22" c="#cfcfcf" sw={1.5}><path d="M20.500 11h-19M10 2.500L1.500 11l8.500 8.500" /></Line></Slot>
        <Slot><Line w={22} vb="0 0 22 22" c="#111" sw={1.6}><path d="M20.500 11.500a9.500 9.500 0 1 1-2.600-6.700L20 7M20.300 1.500V7h-5.500" /></Line></Slot>
        <Omnibox>
          <Line w={21} vb="0 0 21 21" c="#6f6f6f" sw={1.4}><circle cx="10.500" cy="10.500" r="9.600" /><path d="M10.500 9v6M10.500 5.900v.3" /></Line>
          <Scheme>File</Scheme>
          <Divider />
          <Url>C:/Users/admin/mark.html</Url>
          <BoxIcons>
            <Line w={20} c="#7a7a7a" sw={1.4}>
              <path d="M1 18L7 3h.6L13.500 18M3 13h8.500M11.500 3.500c1.500 1.200 2.300 2.800 2.300 5M14.200 1.200c2.700 2 4 4.500 4 8" />
            </Line>
            <Line w={21} vb="0 0 21 21" c="#6f6f6f" sw={1.4}>
              <path d="M10.500 1.300l2.800 5.900 6.400.9-4.700 4.500 1.200 6.500-5.700-3.100-5.700 3.100L6 12.600 1.300 8.100l6.400-.9z" />
            </Line>
          </BoxIcons>
        </Omnibox>
        <Slot $w={55.5}>
          <Line w={20} sw={1.5}><path d="M7.500 2.500H3.300A2.300 2.300 0 0 0 1 4.800v10.400a2.300 2.300 0 0 0 2.300 2.300h4.200M12.500 2.500h4.200A2.300 2.300 0 0 1 19 4.800v10.400a2.300 2.300 0 0 1-2.300 2.300h-4.200M10 .8v18.400" /></Line>
        </Slot>
        <Slot>
          <Line w={21} vb="0 0 21 21" sw={1.5}>
            <path d="M13 7.200L11.900 7 9.300 1.600 6.700 7l-5.700.8 4.200 4L4.200 18l5.100-2.700M13 7.500h7M12.300 11.500H20M13.500 15.500H20" />
          </Line>
        </Slot>
        <Slot>
          <Line w={21} vb="0 0 21 21" sw={1.5}>
            <rect x="6.800" y="6.300" width="13.200" height="13.200" rx="2.500" />
            <path d="M13.400 9.500v6.800M10 12.900h6.800M4.300 14.500c-1.300-.4-1.700-1.200-1.900-2.500L1.200 5.200C1 3.700 1.700 2.700 3.200 2.400l7.700-1.300c1.500-.2 2.400.4 2.700 1.900" />
          </Line>
        </Slot>
        <Slot>
          <Line w={22} vb="0 0 22 22" sw={1.5}>
            <path d="M1.500 9C.6 5.500 2.400 2 6 2c2.300 0 4 1 5 2.800C12 3 13.700 2 16 2c3.600 0 5.400 3.500 4.500 7M1 11h4.500L8 7l3.500 8L14 10.500h6M4 14l6.500 6" />
            <circle cx="16.700" cy="17" r="4.500" fill="#107c10" stroke="#107c10" strokeWidth=".5" />
            <path d="M14.600 17.200l1.500 1.500 2.700-3" stroke="#fff" strokeWidth="1.200" />
          </Line>
        </Slot>
        <Slot>
          <svg width="18" height="4" viewBox="0 0 18 4"><circle cx="2.500" cy="2" r="1.700" /><circle cx="9" cy="2" r="1.700" /><circle cx="15.500" cy="2" r="1.700" /></svg>
        </Slot>
        <Slot $w={52}><CopilotMark /></Slot>
      </Toolbar>

      <Body>
        <Page><Heading>Click here to Find Grade Result of a S</Heading></Page>
        <Sidebar>
          {sideIcons.map((Icon, i) => (
            <Slot key={i} $h={50.2}><Icon /></Slot>
          ))}
          <Rule $m="14px 0 14px" />
          <Slot $h={50}><Line w={16} vb="0 0 16 16" c="#333" sw={1.3}><path d="M8 1v14M1 8h14" /></Line></Slot>
          <Rule $m="auto 0 0" />
          <Slot $h={55}><Gear /></Slot>
        </Sidebar>
      </Body>

      <Taskbar>
        <Weather>
          <WeatherIcon />
          <div><div>92°F</div><Muted>Partly sunny</Muted></div>
        </Weather>
        <Slot><StartIcon /></Slot>
        <SearchBox>
          <Line w={20} sw={2} c="#1f1f1f"><circle cx="8.500" cy="8.500" r="7" /><path d="M13.700 13.800l4.500 4.700" /></Line>
          <SearchLabel>Search</SearchLabel>
          <SearchArt />
        </SearchBox>
        {apps.map(([Icon, mark], i) => (
          <AppSlot key={i} $mark={mark}><Tile $kind={mark}><Icon /></Tile></AppSlot>
        ))}
        <Tray>
          <Slot $w={46}><Line w={14} h={8} vb="0 0 14 8" sw={1.7}><path d="M1 7l6-6 6 6" /></Line></Slot>
          <TrayText $w={50} $mr={7} $align="center">ENG<br />IN</TrayText>
          <Slot $w={30}><Wifi /></Slot>
          <Slot $w={30}><Volume /></Slot>
          <Slot $w={30}><Battery /></Slot>
          <TrayText $w={93} $align="right">11:48<DateText>04-05-2024</DateText></TrayText>
          <Slot $w={38}><Bell /></Slot>
          <Slot $w={52}><CopilotPre /></Slot>
        </Tray>
      </Taskbar>

      <Prompt>
        <PromptTitle>This page says</PromptTitle>
        <PromptText>Enter Subject-3 Marks</PromptText>
        <PromptInput>88</PromptInput>
        <PromptActions>
          <Button $primary>OK</Button>
          <Button>Cancel</Button>
        </PromptActions>
      </Prompt>
    </Screen>
  );
}
